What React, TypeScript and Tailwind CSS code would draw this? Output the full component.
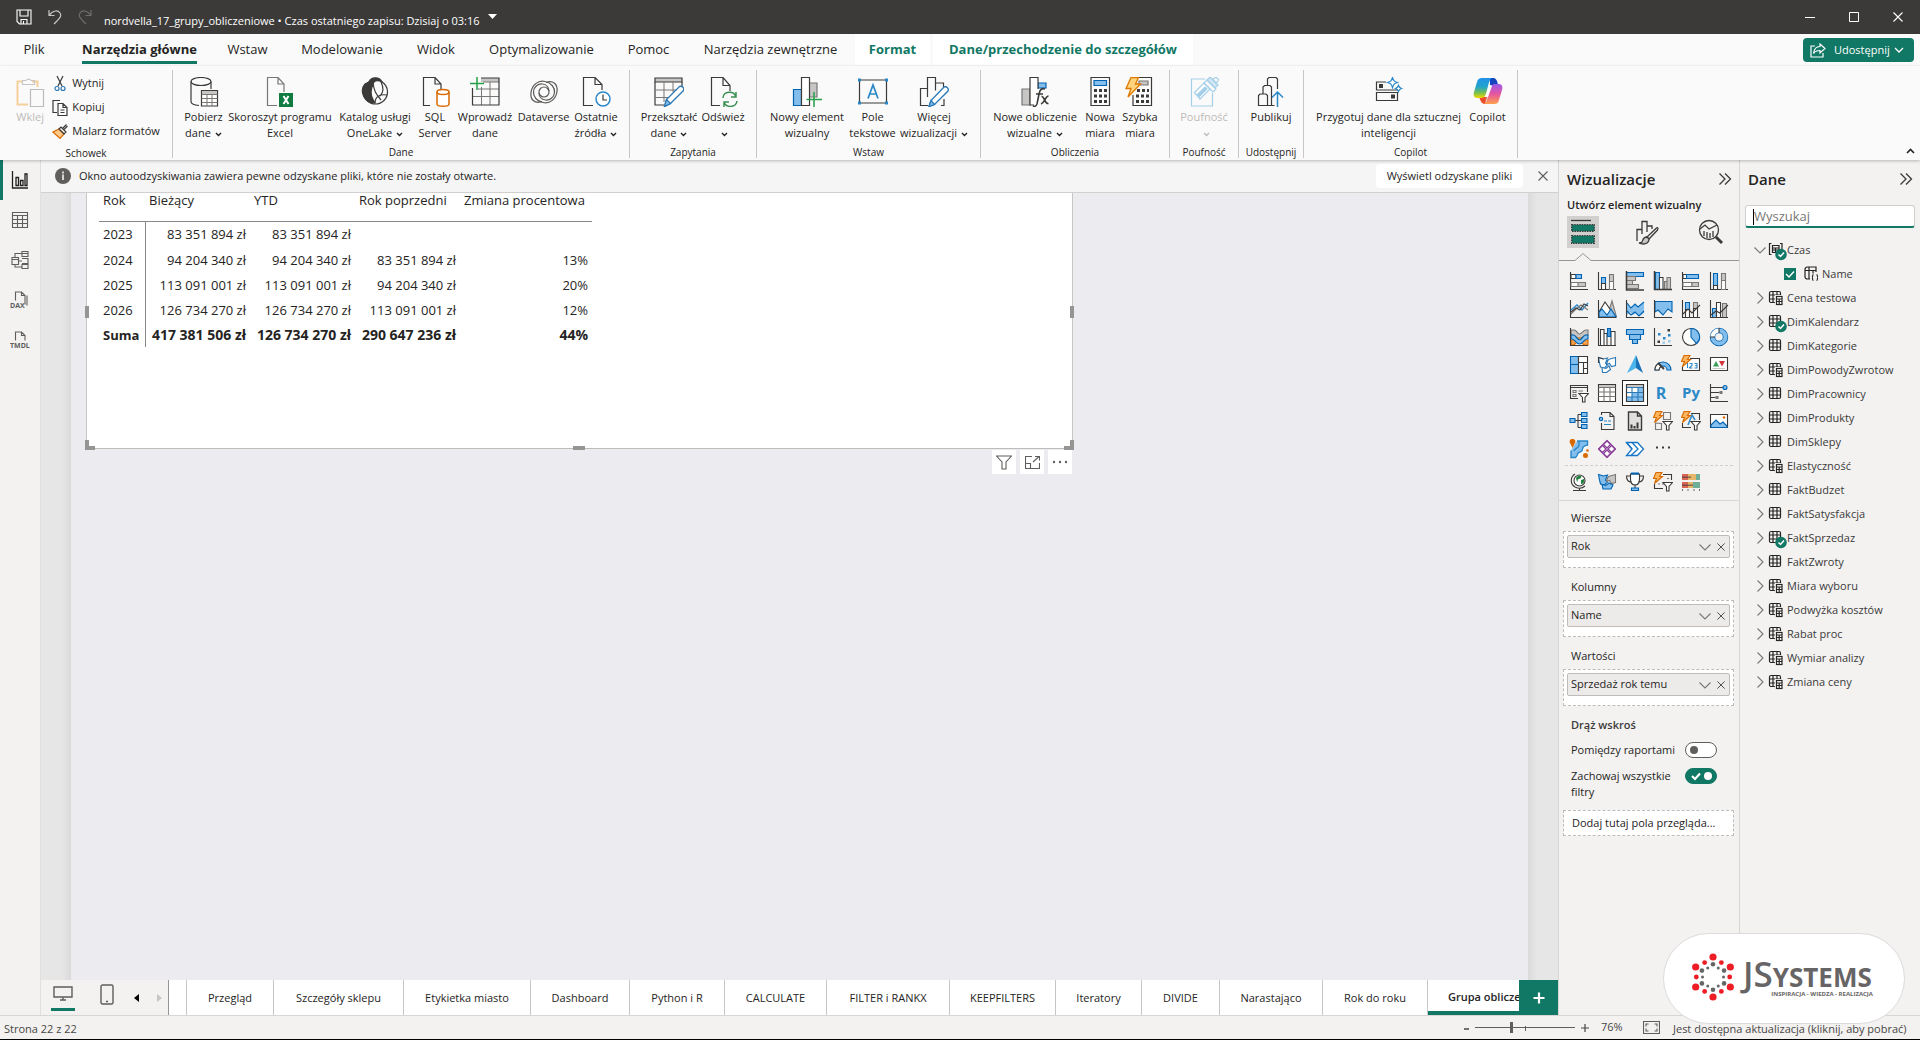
import React from "react";
import clsx from "clsx";

type Kids = { children?: React.ReactNode };

const INK = "#3b3a39";
const BLUE = "#0063b1";
const SKY = "#83beec";
const GREY = "#c8c6c4";
const MID = "#797775";
const GREEN = "#117865";
const ORANGE = "#d86a00";

/* ---------- small shared drawings ---------- */

function Caret({ className = "" }: { className?: string }) {
  return (
    <svg width="7" height="5" viewBox="0 0 7 5" fill="none" stroke="currentColor" strokeWidth="1.4" className={clsx("ml-1 inline-block", className)}>
      <path d="M1 1l2.5 2.5L6 1" />
    </svg>
  );
}

function Chevron({ open }: { open?: boolean }) {
  return (
    <svg width="12" height="12" viewBox="0 0 12 12" fill="none" stroke="#797775" strokeWidth="1.1" className="shrink-0">
      <path d={open ? "M0.500 3.500l5.500 5.500 5.500-5.500" : "M3.500 0.500l5.500 5.500-5.500 5.500"} />
    </svg>
  );
}

function Cross({ size = 10, color = INK }: { size?: number; color?: string }) {
  return (
    <svg width={size} height={size} viewBox="0 0 10 10" fill="none" stroke={color} strokeWidth="1.1">
      <path d="M0.500 0.500l9 9M9.500 0.500l-9 9" />
    </svg>
  );
}

function DoubleChevron() {
  return (
    <svg width="14" height="14" viewBox="0 0 14 14" fill="none" stroke={INK} strokeWidth="1.3">
      <path d="M1.500 1.500L7 7l-5.500 5.500M7 1.500L12.500 7 7 12.500" />
    </svg>
  );
}

/* ---------- ribbon icons ---------- */

function R({ children }: Kids) {
  return (
    <svg width="30" height="30" viewBox="0 0 30 30" fill="none" stroke={INK} strokeWidth="1.2" className="shrink-0">
      {children}
    </svg>
  );
}

const PAGE = "M10 28.500H3.500V0.500H15l6 6.500v8M15 0.500V7h6";

const ribbonIcons: Record<string, React.ReactNode> = {
  paste: (
    <R>
      <path d="M13 27.500H2.500v-23H8M17 4.500h5.500V10" stroke="#f5cf9b" strokeWidth="2" />
      <path d="M7.500 7.500v-4H11a3 3 0 0 1 5 0h3.500v4z" stroke={GREY} />
      <path d="M15.500 12.500h13v17h-13z" stroke="#bebbb8" fill="#fafafa" />
    </R>
  ),
  getData: (
    <R>
      <ellipse cx="12" cy="4.500" rx="10" ry="4" />
      <path d="M2 4.500v20c0 2 3 3.500 8 4M22 4.500V12" />
      <path d="M12.500 13.500h16v15.500h-16z" fill="#fff" />
      <path d="M13 15.500h15" strokeWidth="3" stroke={GREY} />
      <path d="M12.500 17.500h16M12.500 21.500h16M12.500 25.500h16M18 17.500V29M23 17.500V29" strokeWidth="1" stroke={MID} />
    </R>
  ),
  excel: (
    <R>
      <path d="M12 28.500H2.500V0.500H13l6 6.500v8M13 0.500V7h6" stroke={MID} />
      <path d="M14 16h14v14H14z" fill="#107c41" stroke="none" />
      <path d="M18.500 19l5 8M23.500 19l-5 8" stroke="#fff" strokeWidth="2" />
    </R>
  ),
  onelake: (
    <R>
      <circle cx="15.500" cy="15" r="12" />
      <path d="M9 5C11 0 19-1 22 5c-5-3-9-1-9 3-3 5-2 12 2 18C4 26-1 14 5 7z" fill={INK} />
      <path d="M13 6c1 8 3 11 8 17M21 5c3 6 2 11-1 14M15 26c0-7 6-9 12-8" />
    </R>
  ),
  sql: (
    <R>
      <path d={PAGE} />
      <path d="M17 15v12c0 3 12 3 12 0V15" stroke={ORANGE} strokeWidth="1.500" fill="#fff" />
      <ellipse cx="23" cy="15" rx="6" ry="2.500" stroke={ORANGE} strokeWidth="1.500" fill="#fff" />
    </R>
  ),
  enter: (
    <R>
      <path d="M11 1h18v4H11z" fill={GREY} stroke="none" />
      <path d="M2.500 19.500H29M8 12h21M11.500 10v18M20 5v23M13 5h16" stroke={MID} strokeWidth="1" />
      <path d="M11 1h18v27H2.500V11" />
      <path d="M7 0v13M0 6.500h14" stroke="#23a04a" strokeWidth="1.500" />
    </R>
  ),
  dataverse: (
    <R>
      <path d="M13 24.500C6 27 1 23 2 15.500 3 8 9 3 16 4.500c6 1 10 6 9.500 11-.5 5-4.500 8-9 7.500-4-.4-6.500-3.500-6.500-7" stroke="#5c5a58" />
      <path d="M17 5.500C24 3 29 7 28 14.500 27 22 21 27 14 25.500c-6-1-10-6-9.500-11C5 9.500 9 6.500 13.500 7c4 .4 6.500 3.500 6.500 7" stroke="#5c5a58" />
      <circle cx="15" cy="15" r="5" stroke="#5c5a58" />
    </R>
  ),
  recent: (
    <R>
      <path d="M12 28.500H2.500V0.500H14l7 7V13M14 0.500V7.500h7" />
      <circle cx="22" cy="22" r="7" fill="#fff" stroke="#2b88c8" strokeWidth="1.500" />
      <path d="M22 17.500V23h4" />
    </R>
  ),
  transform: (
    <R>
      <path d="M1 5v23h9M28 5v5" />
      <path d="M1 1h27v4H1z" fill={GREY} stroke={INK} />
      <path d="M1 13h22M1 20.500h14M10 5v20M19 5v10" stroke={MID} strokeWidth="1" />
      <path d="M10.500 29.500l2-7L25.500 9.500c3-1 5 2 4 4L16.500 26.500z" fill="#fff" stroke="#2b78b5" strokeWidth="1.400" />
      <path d="M10.500 29.500l2-7 4 4z" fill={SKY} stroke="#2b78b5" />
    </R>
  ),
  refresh: (
    <R>
      <path d="M12 28.500H3.500V0.500H15l7 8V14M15 0.500V8.500h7" />
      <path d="M15 21c0-7 11-8 13-1M28 15v5h-5M29 24c-1 7-11 7-13 1M16 30v-5h5" stroke="#3a9152" strokeWidth="1.500" />
    </R>
  ),
  newVisual: (
    <R>
      <path d="M1.500 12.500h8v16h-8z" fill={SKY} stroke={BLUE} />
      <path d="M17 6h8v14h-8z" fill={GREY} stroke={MID} />
      <path d="M9.500 0.500h8v28h-8z" fill="#fff" />
      <path d="M22 15v15M14.500 22.500H30" stroke="#23a04a" strokeWidth="1.500" />
    </R>
  ),
  textBox: (
    <R>
      <path d="M1.500 3h27v23h-27z" />
      <path d="M0 1.500h3v3H0zM27 1.500h3v3h-3zM0 24.500h3v3H0zM27 24.500h3v3h-3z" fill="#2b88c8" stroke="none" />
      <path d="M10 21.500L15 8l5 13.500M11.500 17h7" stroke="#2b88c8" strokeWidth="1.700" />
    </R>
  ),
  moreVisuals: (
    <R>
      <path d="M9 28.500H1.500v-17h7M8.500 20V0.500h8v13M16.500 6h8v4M22 28.500h3V22" />
      <path d="M10 29.500l2-6L25 10c3-1 5 2 4 4L15.500 27.500z" fill="#fff" stroke="#2b78b5" strokeWidth="1.400" />
      <path d="M10 29.500l2-6 3.500 4z" fill={SKY} stroke="#2b78b5" />
    </R>
  ),
  newCalc: (
    <R>
      <path d="M2 12h8v16H2z" fill={GREY} stroke={MID} />
      <path d="M18 6h8v5h-8z" fill={SKY} stroke={BLUE} />
      <path d="M10 0.500h8v27.500h-8z" fill="#fff" stroke="none" />
      <path d="M14 28h-4V0.500h8V12" />
      <path d="M25 12c-3-1-5 0-6 5l-2 10c-1 2-2 3-4 2M16 17h7M21.500 19.500c3-1 3 8 7 7M28.500 19c-3 0-4 7-7.500 8" strokeWidth="1.600" />
    </R>
  ),
  newMeasure: (
    <R>
      <path d="M6 0.500h18.500v28H6z" />
      <path d="M9 3.500h12.500v5H9z" fill={SKY} stroke={BLUE} />
      <path d="M9 13.500h13M9 19h13M9 24.500h13" strokeWidth="3" strokeDasharray="3 2" />
    </R>
  ),
  quickMeasure: (
    <R>
      <path d="M14 0.500h12.500v28H8V18" />
      <path d="M14 4h9v4h-9z" fill={GREY} stroke={MID} />
      <path d="M12 13.500h12M11 19h13M11 24.500h13" strokeWidth="3" strokeDasharray="3 2" />
      <path d="M6 .5h7.500L10.500 7h5L3 20l3-8.500H1z" fill="#ffd47d" stroke="#e07800" strokeWidth="1.300" />
    </R>
  ),
  privacy: (
    <R>
      <g stroke="#a5cfe8">
        <path d="M16 2H2.500v27h21V16" />
        <path d="M5.500 15.500L15 6l6 6-10 10z" fill="#fff" />
        <path d="M8.500 17.500L16 10l2 2-7.500 7.500z" fill="#a5cfe8" />
        <path d="M18 3l3-3 8 8-3 3z" fill="#cfe6f4" />
        <path d="M15 6l3-3 9 9-3 3zM24 2l3-2 3 3-3 3z" />
      </g>
    </R>
  ),
  publish: (
    <R>
      <path d="M11.500 28.500h-9V18.500L4 17h6l1.500 1.500zM7 17V10l1.500-1.500H14L15.500 10v18.500h-4M11.500 8.500V2L13 0.500h7L21.500 2v10M15.500 28.500h3" />
      <path d="M21.500 30V15M16 20.500l5.500-5.500 5.500 5.500" stroke="#2b88c8" strokeWidth="1.500" />
    </R>
  ),
  aiData: (
    <R>
      <path d="M12 5H2.500v8h21v-2M2.500 15.500h21v8h-21z" />
      <path d="M5 7h4v4H5zM17 17.500h4v4h-4z" fill={INK} stroke="none" />
      <path d="M18.500 0.500c1 3.500 1.500 4 5 5-3.500 1-4 1.500-5 5-1-3.500-1.500-4-5-5 3.500-1 4-1.500 5-5zM24.500 8.500c.6 2 .9 2.300 3 3-2.100.7-2.400 1-3 3-.6-2-.9-2.300-3-3 2.100-.7 2.400-1 3-3z" stroke="#2b88c8" fill="#fff" />
    </R>
  ),
  copilot: (
    <svg width="30" height="30" viewBox="0 0 30 30" className="shrink-0">
      <defs>
        <linearGradient id="cpA" x1="0" y1="0" x2="0" y2="1">
          <stop offset="0" stopColor="#1f8fe8" />
          <stop offset=".45" stopColor="#22a5c9" />
          <stop offset=".75" stopColor="#7dc14c" />
          <stop offset="1" stopColor="#f5d800" />
        </linearGradient>
        <linearGradient id="cpB" x1="0" y1="0" x2="0" y2="1">
          <stop offset="0" stopColor="#9b59e8" />
          <stop offset=".5" stopColor="#e556a0" />
          <stop offset="1" stopColor="#ffa04a" />
        </linearGradient>
      </defs>
      <path d="M17 1h3c3 0 4 2 5 7h-8z" fill="#1546c0" />
      <path d="M6 20h8l-2 7c-3 0-4-2-6-7z" fill="#ee4d2d" />
      <path d="M9 1h10c-2 1-3 4-4 8l-2 8c-1 3-3 4-5 4H4c-3 0-4-3-3-6l3-10c1-3 2-4 5-4z" fill="url(#cpA)" />
      <path d="M21 27H11c2-1 3-4 4-8l2-8c1-3 3-4 5-4h4c3 0 4 3 3 6l-3 10c-1 3-2 4-5 4z" fill="url(#cpB)" />
      <path d="M16 9h3l-4 11h-3z" fill="#fff" />
    </svg>
  ),
};

function RibbonButton({ icon, lines, width, menu, disabled }: { icon: string; lines: string[]; width: string; menu?: boolean; disabled?: boolean }) {
  return (
    <button type="button" disabled={disabled} className={clsx("flex flex-col items-center whitespace-nowrap", width, disabled ? "text-[#bebbb8]" : "text-[#252423]")}>
      {ribbonIcons[icon]}
      <span className="mt-0.5 block text-[11px] leading-4">
        {lines.map((l, i) => (
          <span key={i} className="block h-4">
            {l}
            {menu && i === lines.length - 1 && <Caret className={l ? "" : "ml-0"} />}
          </span>
        ))}
      </span>
    </button>
  );
}

function RibbonGroup({ label, width, children }: Kids & { label: string; width: string }) {
  return (
    <section aria-label={label} className={clsx("mt-1 mb-0.5 flex shrink-0 flex-col items-center border-r border-[#c8c6c4] pt-[7px]", width)}>
      <div className="flex h-[65px] items-start justify-center">{children}</div>
      <span className="mt-[5px] text-[10px] leading-3 text-[#252423]">{label}</span>
    </section>
  );
}

/* ---------- visual gallery ---------- */

function V({ children }: Kids) {
  return (
    <svg width="20" height="20" viewBox="0 0 20 20" fill="none" stroke={INK} strokeWidth="1.1" className="shrink-0">
      {children}
    </svg>
  );
}
const Axis = () => <path d="M1.500 1v17.500H19" />;
const Bolt = () => <path d="M3 0.500h6L6.500 4.500H9.500L1.500 11.500 3.500 6.500H0.500z" fill="#ffb45e" stroke={ORANGE} />;
const Funnel = () => <path d="M10 10.500h9.500L16 14.500v4.500h-2.500v-4.500z" fill="#fff" />;

const gallery: [string, React.ReactNode][] = [
  ["Skumulowany słupkowy", <V><Axis /><path d="M2 3.500h5v4H2z" fill="#fff" /><path d="M7 3.500h5.500v4H7z" fill={SKY} stroke={BLUE} /><path d="M2 11.500h9v4H2z" fill="#fff" stroke={MID} /><path d="M9 11.500h7.500v4H9z" fill={GREY} stroke={MID} /></V>],
  ["Skumulowany kolumnowy", <V><Axis /><path d="M4.500 6.500h4v6h-4z" fill={SKY} stroke={BLUE} /><path d="M4.500 12.500h4v6h-4z" fill="#fff" /><path d="M12.500 3.500h4v7h-4z" fill={GREY} stroke={MID} /><path d="M12.500 10.500h4v8h-4z" fill="#fff" stroke={MID} /></V>],
  ["Grupowany słupkowy", <V><path d="M1.500 1.500h17v4h-17z" fill={SKY} stroke={BLUE} /><path d="M1.500 5.500h9v4h-9z" fill={GREY} stroke={MID} /><path d="M1.500 9.500h6v4h-6zM1.500 13.500h12v4h-12z" fill={GREY} stroke={MID} /><path d="M1.500 0v19H19" strokeWidth="1.500" /></V>],
  ["Grupowany kolumnowy", <V><path d="M2.500 1.500h4v17h-4z" fill={SKY} stroke={BLUE} /><path d="M6.500 6.500h3.500v12H6.500z" fill="#fff" /><path d="M11.500 10.500h2.500v8h-2.500zM14 6.500h3.500v12H14z" fill={GREY} stroke={MID} /><path d="M1.500 0v18.500H19" strokeWidth="1.500" /></V>],
  ["100% słupkowy", <V><Axis /><path d="M2 3.500h4v4H2z" fill="#fff" /><path d="M5.500 3.500h12v4h-12z" fill={SKY} stroke={BLUE} /><path d="M2 11.500h9v4H2z" fill="#fff" stroke={MID} /><path d="M11 11.500h6.500v4H11z" fill={GREY} stroke={MID} /></V>],
  ["100% kolumnowy", <V><Axis /><path d="M4.500 2.500h4v12h-4z" fill={SKY} stroke={BLUE} /><path d="M4.500 14.500h4v4h-4z" fill="#fff" /><path d="M12.500 2.500h4v7h-4z" fill={GREY} stroke={MID} /><path d="M12.500 9.500h4v9h-4z" fill="#fff" stroke={MID} /></V>],
  ["Liniowy", <V><Axis /><path d="M2 11l6-5 5 5 6-7" stroke="#2b88c8" strokeWidth="1.400" /><path d="M2 15l5-5 5-4 7 5" stroke={MID} /><path d="M2 13l5-4 4 2 4-6 4 2" /></V>],
  ["Warstwowy", <V><path d="M10 18l5-16 4.500 16z" fill={GREY} stroke={MID} /><path d="M2 13L8 3l7 10-4 3z" fill="#fff" /><path d="M2 18v-5l3-3 5 6 4-6 5 8z" fill={SKY} stroke={BLUE} /><Axis /></V>],
  ["Skumulowany warstwowy", <V><path d="M2 4l4 5 4-4 3 3 6-5v11l-5 3-3-3-3 2-3-3-3 3z" fill={SKY} stroke="none" /><path d="M2 4l4 5 4-4 3 3 6-5M2 12l4 4 4-3 4 4 5-5" stroke={BLUE} /><Axis /></V>],
  ["100% warstwowy", <V><path d="M2 2.500h17V13l-4-3-5 6-5-5-3 2z" fill={SKY} stroke={BLUE} /><Axis /></V>],
  ["Liniowy i skumulowany", <V><path d="M4.500 3.500h4v7h-4z" fill={SKY} stroke={BLUE} /><path d="M4.500 10.500h4v8h-4z" fill="#fff" /><path d="M12.500 3.500h4v6h-4z" fill={GREY} stroke={MID} /><path d="M12.500 9.500h4v9h-4z" fill="#fff" /><path d="M2 15l5-5 4 4 8-8" /><Axis /></V>],
  ["Liniowy i grupowany", <V><path d="M3.500 9.500h4v9h-4z" fill={SKY} stroke={BLUE} /><path d="M7.500 3.500h4v15h-4z" fill="#fff" /><path d="M13.500 4.500h4v14h-4z" fill={GREY} stroke={MID} /><path d="M2 16l5-4 4 2 8-8" /><Axis /></V>],
  ["Wstążkowy", <V><path d="M2 3h3c3 0 3 4 5.500 4S14 3 17 3h2v5h-2c-3 0-4 4-6.500 4S7 8 4 8H2z" fill={GREY} stroke={MID} /><path d="M2 13h3l3-2h5l3 2h3v5h-4l-3-3h-4l-3 3H2z" fill="#f0a050" stroke={ORANGE} /><path d="M2 8h2c3 0 4 5 6.500 5S14 8 17 8h2v4h-1c-3 0-4 5-7.500 5S6 12 3 12H2z" fill={SKY} stroke={BLUE} /><Axis /></V>],
  ["Kaskadowy", <V><path d="M3.500 2.500H7v16H3.500zM7 6.500h3v12H7zM14 4.500h4v14h-4z" fill="#fff" /><path d="M10.500 1.500h3v8h-3z" fill="#4a9be0" stroke={BLUE} /><Axis /></V>],
  ["Lejkowy", <V><path d="M1.500 2.500h17v5h-17zM4.500 7.500h11v5h-11zM7.500 12.500h5v4h-5z" fill={SKY} stroke={BLUE} /></V>],
  ["Punktowy", <V><Axis /><g stroke="none"><path d="M5 6h2.500v2.500H5zM10 10h2.500v2.500H10zM15 7h2.500v2.500H15z" fill="#2b88c8" /><path d="M14.500 2h2.500v2.500h-2.500zM4.500 13.500H7V16H4.500z" fill={INK} /><path d="M9.500 14.500H12V17H9.500zM15 13h2.500v2.500H15z" fill="#9ccbea" /></g></V>],
  ["Kołowy", <V><circle cx="10" cy="10" r="8.500" fill="#fff" /><path d="M10 1.500a8.500 8.500 0 0 1 5.500 15L10 10z" fill={SKY} stroke={BLUE} /></V>],
  ["Pierścieniowy", <V><circle cx="10" cy="10" r="6.500" stroke={BLUE} strokeWidth="5.500" /><circle cx="10" cy="10" r="6.500" stroke={SKY} strokeWidth="4" /><path d="M10 3.500A6.500 6.500 0 0 0 3.500 10" stroke="#fff" strokeWidth="4" /><path d="M10 1v5M1 10h5" /></V>],
  ["Mapa drzewa", <V><path d="M1.500 1.500h8v17h-8z" fill={SKY} stroke={BLUE} /><path d="M1.500 9.500h8" stroke={BLUE} /><path d="M9.500 1.500h9v6h-9zM9.500 7.500h5v11h-5zM14.500 7.500h4v6h-4zM14.500 13.500h4v5h-4z" fill="#fff" /></V>],
  ["Mapa", <V><path d="M1.500 2.500l5 1.500 4-1-2 5 2 2-3 3-4-1-1-4zM10.500 6c1-3 4-2 8-3.500v8l-4 1-2-3-3 1zM5 12.500l4 1 3-2.500 1.500 3.500-4 3h-4z" fill="#fff" stroke="#2b78b5" /><path d="M1.500 8V2.500l5 1.500" /></V>],
  ["Azure Maps", <V><path d="M11 0l7 18-7-5z" fill="#1a73b8" stroke="none" /><path d="M11 0L2 18l9-5z" fill="#4bb4ea" stroke="none" /></V>],
  ["Miernik", <V><path d="M2 15a8 8 0 0 1 16 0h-4a4 4 0 0 0-8 0z" fill={SKY} stroke={BLUE} /><path d="M2 15a8 8 0 0 1 4-7l2 3.500a4 4 0 0 0-2 3.500z" fill="#fff" /><path d="M5 8l6 6" strokeWidth="1.800" /></V>],
  ["Karta", <V><path d="M9 3.500h9.500v12h-17V11" fill="#fff" /><path d="M6.500 8v5M8.500 8.500h2.500V10.500l-2.500 2v.5H11.500M13.500 8.500H16v4.500h-2.500M14 10.700h2" stroke="#2b88c8" /><Bolt /></V>],
  ["Kluczowy wskaźnik", <V><path d="M1.500 2.500h17v13h-17z" fill="#fff" /><path d="M4 11.500L7 6l3 5.500z" fill="#3c9b58" stroke="none" /><path d="M10 6h6l-3 5.500z" fill="#d13438" stroke="none" /><path d="M3.500 13.500H16" stroke={GREY} /></V>],
  ["Fragmentator", <V><path d="M9 15.500H1.500v-13h17V9M1.500 4.500h17" /><path d="M4 7.500h3v2H4zM4 11.500h3v2H4zM9.500 8H14" stroke={MID} /><Funnel /></V>],
  ["Tabela", <V><path d="M1.500 1.500h17v17h-17z" fill="#fff" /><path d="M2 3h16" stroke={GREY} strokeWidth="2" /><path d="M1.500 4.500h17M1.500 9h17M1.500 13.500h17M7 4.500v14M13 4.500v14" stroke={MID} /></V>],
  ["Macierz", <V><path d="M1.500 1.500h17v17h-17z" fill="#fff" /><path d="M2 3h16" stroke={GREY} strokeWidth="2" /><path d="M13 4.500h5.500v14H1.500v-4.500H13z" fill={SKY} stroke="none" /><path d="M7 9.500h6v5H7z" fill={SKY} stroke="none" /><path d="M1.500 4.500h17M1.500 9.500h17M1.500 14h17M7 4.500v14M13 4.500v14" stroke="#2b78b5" /><path d="M1.500 1.500h17v17h-17z" /></V>],
  ["Skrypt R", <span className="-ml-1 text-[16px] leading-5 font-bold text-[#2b88c8]">R</span>],
  ["Python", <span className="-mt-0.5 text-[15px] leading-5 font-bold text-[#2b88c8]">Py</span>],
  ["Wpływy", <V><Axis /><path d="M1.500 4.500h13M1.500 9.500h9M1.500 14.500h5" /><circle cx="16" cy="4.500" r="2" fill={SKY} stroke={BLUE} /><path d="M10.500 8h3v3h-3zM6.500 13h3v3h-3z" fill={MID} stroke="none" /></V>],
  ["Drzewo dekompozycji", <V><path d="M6 9.500h6M9 3.500v13M9 3.500h3M9 16.500h3" /><path d="M1 7.500h5v4H1zM12.500 1.500h5.500v4h-5.500zM12.500 7.500h5.500v4h-5.500zM12.500 13.500h5.500v4h-5.500z" fill={SKY} stroke={BLUE} /></V>],
  ["Narracja", <V><path d="M4.500 4V1.500H13l4 4v13H4.500V12M13 1.500V5.500h4" /><path d="M7 10h3M7 13.500h7M11 10h3" stroke="#2b88c8" /><circle cx="4" cy="8" r="1.700" fill={SKY} stroke={BLUE} /></V>],
  ["Raport podzielony", <V><path d="M3.500 1h9l4 4v14h-13zM12.500 1v4h4" fill="#e1dfdd" strokeWidth="1.400" /><path d="M6.500 17.500v-4M9.500 17.500v-2.500M12.500 17.500v-6" strokeWidth="2" /></V>],
  ["Fragmentator kart", <V><path d="M10.500 1.500h7v7h-7zM2.500 12v6.500h6v-6z" stroke={MID} /><Bolt /><Funnel /></V>],
  ["Fragmentator tekstu", <V><path d="M10 2.500h8.500V9M1.500 12v4.500H10" /><path d="M7 14l4-10 3 5" stroke="#2b88c8" strokeWidth="1.500" /><Bolt /><Funnel /></V>],
  ["Obraz", <V><path d="M1.500 3.500h17v13h-17z" fill="#fff" /><path d="M2 14l5-5 4 4 3-2 4 4v1.500H2z" fill={SKY} stroke={BLUE} /><circle cx="15" cy="6.500" r="1.300" fill={ORANGE} stroke="none" /></V>],
  ["ArcGIS", <V><path d="M2 10v9h9v-3c0-3 4-2 4-5s3-2 4-3V2H9v4c0 3-3 2-4 5z" fill="#fff" stroke="none" /><path d="M8 2h10.500v4c-3 1-5 1-5 4 0 4-4 2-5 5 0 1.500-1 3-2 3.500H2v-7M10 2v4c0 3-4 3-5 6" stroke="#2b88c8" strokeWidth="1.400" fill={SKY} /><path d="M3.500 0C6 0 7 2 6 4L3.500 9 1 4C0 2 1 0 3.500 0z" fill={ORANGE} stroke="none" /><circle cx="16.500" cy="16.500" r="2.500" fill={ORANGE} stroke="none" /><circle cx="18.500" cy="11.500" r="1.300" fill={ORANGE} stroke="none" /></V>],
  ["Power Apps", <V><g stroke="#8a3f99" fill="#fff" strokeWidth="1.200"><path d="M10 1.500l8.500 8.500L10 18.500 1.500 10z" strokeLinejoin="round" /><path d="M10 2l3.500 3.500L10 9 6.500 5.500zM10 11l3.500 3.500L10 18l-3.500-3.500zM5.500 6.500L9 10l-3.500 3.500L2 10zM14.500 6.500L18 10l-3.500 3.500L11 10z" /></g></V>],
  ["Power Automate", <V><g stroke="#1a76c7" strokeWidth="1.300"><path d="M1.500 3.500h11l6 6.500-6 6.500h-11L7 10z" fill="#fff" /><path d="M1.500 3.500L7 10M6 16.500L13 10 7 3.500" /></g></V>],
  ["Pobierz więcej wizualizacji", <V><path d="M3 8.500h2M9 8.500h2M15 8.500h2" strokeWidth="1.800" /></V>],
];

const customGallery: [string, React.ReactNode][] = [
  ["Globus", <V><circle cx="10.500" cy="8.500" r="5.500" fill="#fff" /><path d="M7 6c2-3 4-2 5-2s0 3-2 3-1 3-2 3zM12 8l3-1c1 3-1 5-3 5z" fill="#23803f" stroke="none" /><path d="M6 2C1 5 1 12 6 15c4 2 8 1 10-1M10.500 16v2.500M4 18.500h13" /></V>],
  ["Mapa kształtów", <V><path d="M1.500 2.500l5 1.500 4-1-2 5 2 2-3 3-4-1-1-4z" fill={SKY} stroke={BLUE} /><path d="M10.500 6c1-3 4-2 8-3.500v8l-4 1-2-3-3 1z" fill={GREY} stroke={MID} /><path d="M5 12.500l4 1 3-2.500 4 2-2 4H6z" fill={SKY} stroke={BLUE} /></V>],
  ["Cele", <V><path d="M5.500 2h9v5c0 3-1 6-4.500 6S5.500 10 5.500 7z" fill="#fff" /><path d="M5.500 4H1.500c0 4 2 6 5 6M14.500 4h4c0 4-2 6-5 6M10 13v3" /><path d="M6 1.500h8" stroke={BLUE} strokeWidth="2" /><path d="M6.500 16h7v2.500h-7z" fill={SKY} stroke={BLUE} /></V>],
  ["Fragmentator przycisków", <V><path d="M10 2.500h8.500V8M1.500 12v4.500H10" /><path d="M5 12h2M9 12h2M14 6.500h2" stroke={MID} /><Bolt /><Funnel /></V>],
  ["Wykres pociskowy", <V><g stroke="none"><path d="M1 2h6v6H1zM1 10h6v6H1z" fill="#d96552" /><path d="M7 2h8v6H7zM7 10h5v6H7z" fill="#e8b66b" /><path d="M15 2h4v6h-4zM12 10h7v6h-7z" fill="#6fae98" /><path d="M1 4.500h9V6H1zM1 12.500h11V14H1z" fill={INK} opacity=".6" /></g><path d="M1.500 17v2M7 17v2M13 17v2M18.500 17v2" strokeWidth=".7" /></V>],
];

function GalleryButton({ label, children, selected }: Kids & { label: string; selected?: boolean }) {
  return (
    <button type="button" aria-label={label} className={clsx("flex h-6 w-6 items-center justify-center", selected && "bg-white outline outline-1 outline-[#252423]")}>
      {children}
    </button>
  );
}

/* ---------- field wells ---------- */

function Well({ label, field }: { label: string; field: string }) {
  return (
    <section className="h-[69px]">
      <h3 className="pl-2 text-[11px] leading-4">{label}</h3>
      <div className="mt-[5px] h-[37px] border border-dashed border-[#bebbb8] bg-white p-[3px]">
        <div className="flex h-[23px] items-center rounded-[2px] border border-[#bebbb8] bg-[#edebe9] pl-[3px]">
          <span className="flex-1 truncate text-[11px]">{field}</span>
          <button type="button" aria-label={`Opcje pola ${field}`} className="mr-1.5">
            <Chevron open />
          </button>
          <button type="button" aria-label={`Usuń pole ${field}`} className="mr-1">
            <Cross size={8} />
          </button>
        </div>
      </div>
    </section>
  );
}

function Toggle({ id, on }: { id: string; on?: boolean }) {
  return (
    <span className="relative inline-flex h-4 w-8 shrink-0">
      <input
        id={id}
        type="checkbox"
        role="switch"
        defaultChecked={on}
        className="h-4 w-8 appearance-none rounded-full border border-[#605e5c] bg-white checked:border-[#117865] checked:bg-[#117865]"
      />
      <svg width="32" height="16" viewBox="0 0 32 16" className="pointer-events-none absolute inset-0">
        {on ? (
          <>
            <circle cx="23" cy="8" r="4" fill="#fff" />
            <path d="M7 8l3 3 5-5.500" fill="none" stroke="#fff" strokeWidth="2.200" />
          </>
        ) : (
          <circle cx="9" cy="8" r="4" fill="#605e5c" />
        )}
      </svg>
    </span>
  );
}

/* ---------- data tree ---------- */

type Kind = "table" | "calc" | "group";

function TableGlyph({ kind, checked }: { kind: Kind; checked?: boolean }) {
  return (
    <svg width="18" height="18" viewBox="0 0 18 18" fill="none" stroke="#252423" strokeWidth="1.200" className="shrink-0 overflow-visible">
      {kind === "group" ? (
        <>
          <path d="M3.500 2.500H1.500v11h2M12 2.500h2v11h-2" />
          <path d="M4.500 4.500h6.500v7H4.500zM4.500 7h6.500M4.500 9h6.500M7.500 7v4" />
        </>
      ) : (
        <>
          <rect x="1.500" y="2.500" width="11" height="11" rx="1.500" />
          <path d="M1.500 6h11M1.500 10h11M5 2.500v11M9 2.500v11" />
        </>
      )}
      {kind === "calc" && (
        <>
          <path d="M7.500 6.500h8v10h-8z" fill="#f3f2f1" stroke="#f3f2f1" />
          <rect x="8.500" y="7.500" width="5.500" height="8" fill="#fff" />
          <path d="M8.500 10h5.500M8.500 12.500h5.500M11.200 10v5" />
        </>
      )}
      {checked && (
        <>
          <circle cx="13" cy="13.500" r="5.800" fill={GREEN} stroke="none" />
          <path d="M10.500 13.500l2 2 3.500-4" stroke="#fff" strokeWidth="1.500" />
        </>
      )}
    </svg>
  );
}

const tables: [string, Kind, boolean?][] = [
  ["Cena testowa", "calc"],
  ["DimKalendarz", "table", true],
  ["DimKategorie", "table"],
  ["DimPowodyZwrotow", "calc"],
  ["DimPracownicy", "table"],
  ["DimProdukty", "table"],
  ["DimSklepy", "table"],
  ["Elastyczność", "calc"],
  ["FaktBudzet", "table"],
  ["FaktSatysfakcja", "table"],
  ["FaktSprzedaz", "table", true],
  ["FaktZwroty", "table"],
  ["Miara wyboru", "calc"],
  ["Podwyżka kosztów", "calc"],
  ["Rabat proc", "calc"],
  ["Wymiar analizy", "calc"],
  ["Zmiana ceny", "calc"],
];

function TreeRow({ name, kind, checked, open }: { name: string; kind: Kind; checked?: boolean; open?: boolean }) {
  return (
    <button type="button" className="flex h-6 w-full items-center pl-[14px] text-left text-[11px] text-[#3b3a39]">
      <Chevron open={open} />
      <span className="ml-0.5 flex w-[19px] justify-start">
        <TableGlyph kind={kind} checked={checked} />
      </span>
      <span className="whitespace-nowrap">{name}</span>
    </button>
  );
}

/* ---------- matrix ---------- */

const rows: string[][] = [
  ["2023", "83 351 894 zł", "83 351 894 zł", "", ""],
  ["2024", "94 204 340 zł", "94 204 340 zł", "83 351 894 zł", "13%"],
  ["2025", "113 091 001 zł", "113 091 001 zł", "94 204 340 zł", "20%"],
  ["2026", "126 734 270 zł", "126 734 270 zł", "113 091 001 zł", "12%"],
];

function Matrix() {
  return (
    <table className="ml-3 w-[493px] table-fixed border-collapse text-[13px] whitespace-nowrap text-[#252423]">
      <colgroup>
        <col className="w-[46px]" />
        <col className="w-[105px]" />
        <col className="w-[105px]" />
        <col className="w-[105px]" />
        <col className="w-[132px]" />
      </colgroup>
      <thead>
        <tr className="h-7 border-b border-[#8a8886]">
          {["Rok", "Bieżący", "YTD", "Rok poprzedni", "Zmiana procentowa"].map((h) => (
            <th key={h} scope="col" className="px-1 pt-0 text-left align-top leading-[14px] font-normal">
              {h}
            </th>
          ))}
        </tr>
      </thead>
      <tbody>
        {rows.map((r, i) => (
          <tr key={r[0]} className={i === 0 ? "h-[26px]" : "h-[25px]"}>
            {r.map((c, j) =>
              j === 0 ? (
                <th key={j} scope="row" className="border-r border-[#8a8886] px-1 text-left leading-4 font-normal">
                  {c}
                </th>
              ) : (
                <td key={j} className="px-1 text-right leading-4">
                  {c}
                </td>
              ),
            )}
          </tr>
        ))}
      </tbody>
      <tfoot>
        <tr className="h-[25px] font-bold">
          <th scope="row" className="border-r border-[#8a8886] px-1 text-left leading-4">
            Suma
          </th>
          {["417 381 506 zł", "126 734 270 zł", "290 647 236 zł", "44%"].map((c) => (
            <td key={c} className="px-1 text-right text-[14px] leading-4">
              {c}
            </td>
          ))}
        </tr>
      </tfoot>
    </table>
  );
}

/* ---------- page sections ---------- */

const menuTabs: [string, string][] = [
  ["Plik", "w-[68px]"],
  ["Narzędzia główne", "w-[143px]"],
  ["Wstaw", "w-[73px]"],
  ["Modelowanie", "w-[116px]"],
  ["Widok", "w-[72px]"],
  ["Optymalizowanie", "w-[139px]"],
  ["Pomoc", "w-[75px]"],
  ["Narzędzia zewnętrzne", "w-[169px]"],
];

const pageTabs: [string, string][] = [
  ["Przegląd", "w-[87px]"],
  ["Szczegóły sklepu", "w-[130px]"],
  ["Etykietka miasto", "w-[127px]"],
  ["Dashboard", "w-[99px]"],
  ["Python i R", "w-[95px]"],
  ["CALCULATE", "w-[102px]"],
  ["FILTER i RANKX", "w-[123px]"],
  ["KEEPFILTERS", "w-[106px]"],
  ["Iteratory", "w-[86px]"],
  ["DIVIDE", "w-[78px]"],
  ["Narastająco", "w-[103px]"],
  ["Rok do roku", "w-[105px]"],
];

function TitleBar() {
  return (
    <div className="flex h-[34px] shrink-0 items-center bg-[#3b3a39] text-white">
      <button type="button" aria-label="Zapisz" className="ml-4">
        <svg width="16" height="16" viewBox="0 0 16 16" fill="none" stroke="#fff" strokeWidth="1.100">
          <path d="M1 1h14v14H3.500L1 12.500zM4 1v6h8V1M5 15v-4.500h6V15M7.500 12v3" />
        </svg>
      </button>
      <button type="button" aria-label="Cofnij" className="ml-4">
        <svg width="14" height="16" viewBox="0 0 14 16" fill="none" stroke="#c8c6c4" strokeWidth="1.200">
          <path d="M1 1v5.500h5.500M1.500 6C5 1 10 1 12 4c2 3 0 5-6 11" />
        </svg>
      </button>
      <button type="button" aria-label="Ponów" disabled className="ml-4">
        <svg width="14" height="16" viewBox="0 0 14 16" fill="none" stroke="#6e6c6a" strokeWidth="1.200">
          <path d="M13 1v5.500H7.500M12.500 6C9 1 4 1 2 4c-2 3 0 5 6 11" />
        </svg>
      </button>
      <button type="button" className="mt-2 ml-3 text-left text-[11px] leading-4 whitespace-nowrap">
        nordvella_17_grupy_obliczeniowe • Czas ostatniego zapisu: Dzisiaj o 03:16
      </button>
      <svg width="9" height="6" viewBox="0 0 9 6" className="ml-2">
        <path d="M0 0h9L4.500 5z" fill="#fff" />
      </svg>
      <div className="ml-auto flex items-center">
        <button type="button" aria-label="Minimalizuj" className="flex w-11 justify-center">
          <svg width="10" height="10" viewBox="0 0 10 10" stroke="#fff"><path d="M0 5.500h10" /></svg>
        </button>
        <button type="button" aria-label="Maksymalizuj" className="flex w-11 justify-center">
          <svg width="10" height="10" viewBox="0 0 10 10" fill="none" stroke="#fff"><path d="M0.500 0.500h9v9h-9z" /></svg>
        </button>
        <button type="button" aria-label="Zamknij" className="flex w-11 justify-center">
          <Cross color="#fff" />
        </button>
      </div>
    </div>
  );
}

function MenuBar() {
  return (
    <nav aria-label="Menu główne" className="flex h-8 shrink-0 items-start bg-[#fafafa] text-[13px]">
      {menuTabs.map(([t, w], i) => (
        <button key={t} type="button" className={clsx("relative h-8 shrink-0 whitespace-nowrap", w, i === 1 && "font-bold")}>
          {t}
          {i === 1 && <span className="absolute right-[14px] bottom-0.5 left-[14px] h-[3px] bg-[#117865]" />}
        </button>
      ))}
      <button type="button" className="h-[31px] w-[75px] bg-white font-bold text-[#117865]">
        Format
      </button>
      <button type="button" className="ml-[3px] h-[31px] w-[260px] bg-white font-bold whitespace-nowrap text-[#117865]">
        Dane/przechodzenie do szczegółów
      </button>
      <button type="button" className="mt-1 mr-1.5 ml-auto flex h-6 w-[111px] items-center rounded bg-[#117865] pl-[7px] text-[11px] text-white">
        <svg width="16" height="15" viewBox="0 0 16 15" fill="none" stroke="#fff" strokeWidth="1.200">
          <path d="M5 3H1v11h12v-4M10 1l5 4.500-5 4.500V7.500C7 7.500 5 8 3.500 10.500 4 6 6 3.500 10 3.500z" />
        </svg>
        <span className="ml-2">Udostępnij</span>
        <svg width="10" height="6" viewBox="0 0 10 6" fill="none" stroke="#fff" strokeWidth="1.300" className="ml-1">
          <path d="M1 1l4 4 4-4" />
        </svg>
      </button>
    </nav>
  );
}

function Ribbon() {
  return (
    <div className="relative z-10 flex h-[94px] shrink-0 bg-[#fafafa] shadow-[0_1px_3px_rgba(0,0,0,0.25)]">
      <RibbonGroup label="Schowek" width="w-[173px]">
        <RibbonButton icon="paste" lines={["Wklej"]} width="w-[44px]" disabled />
        <div className="-mt-1.5 mr-1 flex flex-col text-[11px] whitespace-nowrap text-[#252423]">
          <button type="button" className="flex h-6 items-center gap-1">
            <svg width="16" height="17" viewBox="0 0 16 17" fill="none" stroke={INK} strokeWidth="1.200">
              <path d="M5 1l5 10M11 1L6 11" />
              <circle cx="5" cy="13.500" r="2" stroke="#2b78b5" />
              <circle cx="11" cy="13.500" r="2" stroke="#2b78b5" />
            </svg>
            Wytnij
          </button>
          <button type="button" className="flex h-6 items-center gap-1">
            <svg width="16" height="17" viewBox="0 0 16 17" fill="none" stroke={INK} strokeWidth="1.200">
              <path d="M5 13.500H1v-12h7M6 4.500h5l4 4v8H6zM11 4.500v4h4M8.500 11h4M8.500 13.500h4" />
            </svg>
            Kopiuj
          </button>
          <button type="button" className="flex h-6 items-center gap-1">
            <svg width="16" height="17" viewBox="0 0 16 17" fill="none" stroke={INK} strokeWidth="1.200">
              <path d="M1 9l6-3 5 5-4 4.500z" fill="#ffc98a" stroke={ORANGE} />
              <path d="M7 6l2-2 5 5-2 2zM10.500 5.500l4-4M11.500 7l4-4" />
            </svg>
            Malarz formatów
          </button>
        </div>
      </RibbonGroup>
      <RibbonGroup label="Dane" width="w-[457px]">
        <RibbonButton icon="getData" lines={["Pobierz", "dane"]} menu width="w-[43px]" />
        <RibbonButton icon="excel" lines={["Skoroszyt programu", "Excel"]} width="w-[110px]" />
        <RibbonButton icon="onelake" lines={["Katalog usługi", "OneLake"]} menu width="w-[80px]" />
        <RibbonButton icon="sql" lines={["SQL", "Server"]} width="w-[40px]" />
        <RibbonButton icon="enter" lines={["Wprowadź", "dane"]} width="w-[60px]" />
        <RibbonButton icon="dataverse" lines={["Dataverse"]} width="w-[57px]" />
        <RibbonButton icon="recent" lines={["Ostatnie", "źródła"]} menu width="w-[48px]" />
      </RibbonGroup>
      <RibbonGroup label="Zapytania" width="w-[127px]">
        <RibbonButton icon="transform" lines={["Przekształć", "dane"]} menu width="w-[60px]" />
        <RibbonButton icon="refresh" lines={["Odśwież", ""]} menu width="w-[48px]" />
      </RibbonGroup>
      <RibbonGroup label="Wstaw" width="w-[224px]">
        <RibbonButton icon="newVisual" lines={["Nowy element", "wizualny"]} width="w-[80px]" />
        <RibbonButton icon="textBox" lines={["Pole", "tekstowe"]} width="w-[51px]" />
        <RibbonButton icon="moreVisuals" lines={["Więcej", "wizualizacji"]} menu width="w-[72px]" />
      </RibbonGroup>
      <RibbonGroup label="Obliczenia" width="w-[189px]">
        <RibbonButton icon="newCalc" lines={["Nowe obliczenie", "wizualne"]} menu width="w-[92px]" />
        <RibbonButton icon="newMeasure" lines={["Nowa", "miara"]} width="w-[38px]" />
        <RibbonButton icon="quickMeasure" lines={["Szybka", "miara"]} width="w-[42px]" />
      </RibbonGroup>
      <RibbonGroup label="Poufność" width="w-[69px]">
        <RibbonButton icon="privacy" lines={["Poufność", ""]} menu width="w-[60px]" disabled />
      </RibbonGroup>
      <RibbonGroup label="Udostępnij" width="w-[65px]">
        <RibbonButton icon="publish" lines={["Publikuj"]} width="w-[56px]" />
      </RibbonGroup>
      <RibbonGroup label="Copilot" width="w-[214px]">
        <RibbonButton icon="aiData" lines={["Przygotuj dane dla sztucznej", "inteligencji"]} width="w-[154px]" />
        <RibbonButton icon="copilot" lines={["Copilot"]} width="w-[44px]" />
      </RibbonGroup>
      <button type="button" aria-label="Zwiń wstążkę" className="mr-[5px] mb-1.5 ml-auto self-end">
        <svg width="9" height="6" viewBox="0 0 9 6" fill="none" stroke="#252423" strokeWidth="1.600" className="block">
          <path d="M1 5l3.500-3.500L8 5" />
        </svg>
      </button>
    </div>
  );
}

function Rail() {
  const items: [string, React.ReactNode][] = [
    ["Widok raportu", <path d="M1.500 0v17H17M5 14.500v-8h2.500v8zM9.500 14.500v-5H12v5zM14 14.500V3h2v11.500z" stroke="#201f1e" strokeWidth="1.300" />],
    ["Widok tabeli", <path d="M1.500 1.500h15v15h-15zM1.500 4.500h15M1.500 8.500h15M1.500 12.500h15M6.500 4.500v12M11.500 4.500v12" />],
    ["Widok modelu", <path d="M1 6.500h6.500v7H1zM1 8.500h6.500M11 .5h6v5h-6zM11 2.500h6M11 7.500h6v5h-6M11 13.500h6v4h-6zM4 6.500v-4h7M7.500 10H11M4 13.500v2.500h7" />],
    ["Widok zapytań DAX", <><path d="M4.500 9.500V1h6l3.500 3.500v9M10.500 1v3.500H14M16 4.500v10" /><text x="-1" y="17" fontSize="7" fontWeight="700" fill="#605e5c" stroke="none">DAX</text></>],
    ["Widok TMDL", <><path d="M4.500 9.500V1h6l3.500 3.500v5M10.500 1v3.500H14" /><text x="-1" y="17" fontSize="7" fontWeight="700" fill="#605e5c" stroke="none">TMDL</text></>],
  ];
  return (
    <nav aria-label="Widoki" className="flex w-[41px] shrink-0 flex-col border-r border-[#e1dfdd] bg-[#f3f2f1]">
      {items.map(([label, icon], i) => (
        <button key={label} type="button" aria-label={label} className={clsx("flex h-10 items-center justify-center border-l-[3px] pr-[3px]", i === 0 ? "border-[#117865]" : "border-transparent")}>
          <svg width="18" height="18" viewBox="0 0 18 18" fill="none" stroke="#605e5c" strokeWidth="1.100" className="overflow-visible">
            {icon}
          </svg>
        </button>
      ))}
    </nav>
  );
}

function Canvas() {
  return (
    <div className="flex min-h-0 flex-1 bg-[#e6e6e6]">
      <div className="w-[30px] shrink-0 bg-linear-to-r from-[#e6e6e6] from-70% to-[#dadada]" />
      <div className="min-w-0 flex-1 bg-[#ebebf0] pl-[15px]">
        <div className="relative h-[256px] w-[987px] border border-t-0 border-[#c8c6c4] border-b-[#bebbb8] bg-white">
          <Matrix />
          <span className="absolute top-[113px] -left-0.5 h-3 w-1 bg-[#979593]" />
          <span className="absolute top-[113px] -right-0.5 h-3 w-1 bg-[#979593]" />
          <span className="absolute -bottom-0.5 left-[486px] h-1 w-3 bg-[#979593]" />
          <span className="absolute -bottom-0.5 -left-0.5 h-2.5 w-2.5 border-b-[4px] border-l-[4px] border-[#979593]" />
          <span className="absolute -right-0.5 -bottom-0.5 h-2.5 w-2.5 border-r-[4px] border-b-[4px] border-[#979593]" />
        </div>
        <div className="mt-px flex w-[986px] justify-end gap-1">
          <button type="button" aria-label="Filtry" className="flex h-6 w-6 items-center justify-center bg-white">
            <svg width="16" height="15" viewBox="0 0 16 15" fill="none" stroke="#605e5c" strokeWidth="1.100">
              <path d="M.5 1h15L10 7v7H6V7z" />
            </svg>
          </button>
          <button type="button" aria-label="Tryb koncentracji uwagi" className="flex h-6 w-6 items-center justify-center bg-white">
            <svg width="15" height="13" viewBox="0 0 15 13" fill="none" stroke="#605e5c" strokeWidth="1.100">
              <path d="M7 .5H.5v12h14V7M.5 7.500h5v5M8 6l6-5.500M10 .5h4.500v4" />
            </svg>
          </button>
          <button type="button" aria-label="Więcej opcji" className="flex h-6 w-6 items-center justify-center bg-white">
            <svg width="16" height="4" viewBox="0 0 16 4" fill="#605e5c">
              <circle cx="2" cy="2" r="1.200" />
              <circle cx="8" cy="2" r="1.200" />
              <circle cx="14" cy="2" r="1.200" />
            </svg>
          </button>
        </div>
      </div>
      <div className="w-[30px] shrink-0 bg-linear-to-l from-[#e6e6e6] from-70% to-[#dadada]" />
    </div>
  );
}

function PageTabs() {
  return (
    <div className="flex h-[35px] shrink-0 bg-[#f3f2f1] text-[11px]">
      <div className="flex w-[128px] shrink-0 items-start border-r border-[#979593] pl-2.5">
        <button type="button" aria-label="Układ pulpitu" className="flex h-[31px] w-6 flex-col items-center justify-between border-b-[3px] border-[#117865] pt-1.5">
          <svg width="20" height="15" viewBox="0 0 20 15" fill="none" stroke="#605e5c" strokeWidth="1.400">
            <path d="M1 1h18v10H1zM10 11v3M7 14h6" />
          </svg>
        </button>
        <button type="button" aria-label="Układ mobilny" className="ml-[25px] pt-1">
          <svg width="14" height="21" viewBox="0 0 14 21" fill="none" stroke="#605e5c" strokeWidth="1.400">
            <rect x="1" y="1" width="12" height="19" rx="1.500" />
            <path d="M6 17.500h2" />
          </svg>
        </button>
        <button type="button" aria-label="Poprzednie strony" className="ml-5 pt-3.5">
          <svg width="5" height="8" viewBox="0 0 5 8"><path d="M5 0v8L0 4z" fill="#000" /></svg>
        </button>
        <button type="button" aria-label="Następne strony" disabled className="ml-[18px] pt-3.5">
          <svg width="5" height="8" viewBox="0 0 5 8"><path d="M0 0v8l5-4z" fill="#c8c6c4" /></svg>
        </button>
      </div>
      <div className="flex min-w-0 flex-1 bg-white">
        <span className="w-[18px] shrink-0 border-r border-[#c8c6c4]" />
        {pageTabs.map(([t, w]) => (
          <button key={t} type="button" className={clsx("h-full shrink-0 border-r border-[#c8c6c4] pt-0.5 whitespace-nowrap text-[#252423]", w)}>
            {t}
          </button>
        ))}
        <button type="button" aria-current="page" className="min-w-0 flex-1 overflow-hidden border-b-4 border-[#117865] pt-1 pl-5 text-left font-semibold whitespace-nowrap">
          Grupa obliczeniowa
        </button>
      </div>
      <button type="button" aria-label="Nowa strona" className="flex w-[39px] shrink-0 items-center justify-center bg-[#117865]">
        <svg width="12" height="12" viewBox="0 0 12 12" stroke="#fff" strokeWidth="2.200"><path d="M6 .5v11M.5 6h11" /></svg>
      </button>
    </div>
  );
}

function Visualizations() {
  return (
    <aside aria-label="Wizualizacje" className="w-[182px] shrink-0 border-x border-[#d8d6d4] bg-[#f3f2f1] text-[#252423]">
      <div className="flex items-center justify-between pt-[9px] pr-[7px] pl-2">
        <h2 className="text-[15px] leading-5 font-semibold">Wizualizacje</h2>
        <button type="button" aria-label="Zwiń okienko Wizualizacje"><DoubleChevron /></button>
      </div>
      <h3 className="mt-2 pl-2 text-[11px] leading-4 font-semibold whitespace-nowrap">Utwórz element wizualny</h3>
      <div className="mt-[3px] flex justify-between pr-3 pl-2">
        <button type="button" aria-label="Kompiluj wizualizację" className="flex h-8 w-8 items-center justify-center bg-[#d2d0ce]">
          <svg width="24" height="26" viewBox="0 0 24 26" fill="none" stroke={INK} strokeWidth="1.300">
            <path d="M0 1.500h20" />
            <path d="M.7 5.700h22.600v6.600H.7zM.7 16.700h22.600v7.600H.7z" fill={GREEN} strokeDasharray="1.500 1" />
          </svg>
        </button>
        <button type="button" aria-label="Formatuj wizualizację" className="flex h-8 w-8 items-center justify-center">
          <svg width="24" height="25" viewBox="0 0 24 25" fill="none" stroke={INK} strokeWidth="1.300">
            <path d="M2 21V9.500h5V14M7 9V1.500h5V12M12 6h5v3M21.500 8L12 17l2 2 8.500-9c1-2 0-3-1-2z" />
            <path d="M12 17c-4 0-4 3-5 5-1 1-2 1-3 1 4 2 10 1 10-4z" fill={GREY} />
          </svg>
        </button>
        <button type="button" aria-label="Analiza" className="flex h-8 w-8 items-center justify-center">
          <svg width="26" height="26" viewBox="0 0 26 26" fill="none" stroke={INK} strokeWidth="1.300">
            <circle cx="11" cy="11" r="9.500" />
            <path d="M2 10l5-4 4 4 8-4M6 17v-5M9 19v-6M12 19v-5M15 18v-6" />
            <path d="M18 18l6 6" strokeWidth="3" />
          </svg>
        </button>
      </div>
      <svg width="180" height="8" viewBox="0 0 180 8" fill="none" stroke="#979593" className="mt-[5px] block w-full">
        <path d="M0 7.500h16L24 .5l8 7h148" />
      </svg>
      <div className="mt-2 ml-2 grid w-[164px] grid-cols-6 gap-x-1 gap-y-1">
        {gallery.map(([label, icon]) => (
          <GalleryButton key={label} label={label} selected={label === "Macierz"}>
            {icon}
          </GalleryButton>
        ))}
      </div>
      <div className="mx-1.5 mt-1 border-t border-dashed border-[#d2d0ce]" />
      <div className="mt-1 ml-2 grid w-[164px] grid-cols-6 gap-x-1">
        {customGallery.map(([label, icon]) => (
          <GalleryButton key={label} label={label}>
            {icon}
          </GalleryButton>
        ))}
      </div>
      <div className="mt-1.5 border-t border-[#d8d6d4] pt-[9px] pr-[5px] pl-1">
        <Well label="Wiersze" field="Rok" />
        <Well label="Kolumny" field="Name" />
        <Well label="Wartości" field="Sprzedaż rok temu" />
        <h3 className="pl-2 text-[11px] leading-4 font-semibold text-[#3b3a39]">Drąż wskroś</h3>
        <div className="mt-[9px] flex items-center pl-2 text-[11px] leading-4">
          <label htmlFor="cross" className="w-[114px] whitespace-nowrap">Pomiędzy raportami</label>
          <Toggle id="cross" />
        </div>
        <div className="mt-2.5 flex items-start pl-2 text-[11px] leading-4">
          <label htmlFor="keep" className="w-[114px]">Zachowaj wszystkie filtry</label>
          <Toggle id="keep" on />
        </div>
        <div className="mt-2.5 truncate border border-dashed border-[#bebbb8] bg-white px-2 text-[11px] leading-6">Dodaj tutaj pola przegląda...</div>
      </div>
    </aside>
  );
}

function DataPane() {
  return (
    <aside aria-label="Dane" className="w-[180px] shrink-0 bg-[#f3f2f1] text-[#252423]">
      <div className="flex items-center justify-between pt-[9px] pr-[7px] pl-2">
        <h2 className="text-[15px] leading-5 font-semibold">Dane</h2>
        <button type="button" aria-label="Zwiń okienko Dane"><DoubleChevron /></button>
      </div>
      <div className="relative mx-[5px] mt-4">
        <input
          type="text"
          aria-label="Wyszukaj"
          placeholder="Wyszukaj"
          className="block h-[23px] w-full rounded-[3px] border border-b-2 border-[#d2d0ce] border-b-[#117865] bg-white pl-2 text-[13px] placeholder:text-[#797775]"
        />
        <span className="absolute top-1 left-2 h-4 w-px bg-black" />
      </div>
      <div className="mt-2.5">
        <TreeRow name="Czas" kind="group" checked open />
        <div className="flex h-6 items-center pl-[44px] text-[11px] text-[#3b3a39]">
          <span className="relative flex h-3 w-3">
            <input id="field-name" type="checkbox" defaultChecked className="h-3 w-3 appearance-none bg-[#117865]" />
            <svg width="12" height="12" viewBox="0 0 12 12" fill="none" stroke="#fff" strokeWidth="1.400" className="pointer-events-none absolute inset-0">
              <path d="M2 6l3 3 5-5.500" />
            </svg>
          </span>
          <svg width="16" height="16" viewBox="0 0 16 16" fill="none" stroke="#252423" strokeWidth="1.200" className="ml-2">
            <path d="M6 13H3.500C2 13 1 12 1 10.500V3.500C1 2 2 1 3.500 1H12v5M1 4.500h11M5 1v12M9 4.500v3" />
            <path d="M9.500 8.500c-1.500 0-.5 3-1.500 3 1 0 0 3 1.500 3M12.500 8.500c1.500 0 .5 3 1.500 3-1 0 0 3-1.500 3" />
          </svg>
          <label htmlFor="field-name" className="ml-0.5">Name</label>
        </div>
        {tables.map(([name, kind, checked]) => (
          <TreeRow key={name} name={name} kind={kind} checked={checked} />
        ))}
      </div>
    </aside>
  );
}

function StatusBar() {
  return (
    <footer className="flex h-[25px] shrink-0 items-center border-t border-b border-t-[#d8d6d4] border-b-black bg-[#f3f2f1] pt-1 pr-1 pl-1 text-[11px] text-[#484644]">
      <span>Strona 22 z 22</span>
      <button type="button" aria-label="Pomniejsz" className="mr-[5px] ml-auto mb-1">
        <svg width="6" height="8" viewBox="0 0 6 8" stroke="#484644" strokeWidth="1.500" className="block"><path d="M0 5h5" /></svg>
      </button>
      <span className="relative mb-1 flex h-3 w-[100px] items-center">
        <input
          type="range"
          aria-label="Powiększenie"
          defaultValue={36}
          className="h-3 w-[100px] appearance-none bg-transparent [&::-webkit-slider-runnable-track]:h-px [&::-webkit-slider-runnable-track]:bg-[#605e5c] [&::-webkit-slider-thumb]:-mt-[5px] [&::-webkit-slider-thumb]:h-[11px] [&::-webkit-slider-thumb]:w-[3px] [&::-webkit-slider-thumb]:appearance-none [&::-webkit-slider-thumb]:bg-[#605e5c]"
        />
        <span className="absolute top-1 left-[50px] h-[5px] w-px bg-[#605e5c]" />
      </span>
      <button type="button" aria-label="Powiększ" className="mb-1 ml-1.5">
        <svg width="8" height="8" viewBox="0 0 8 8" stroke="#484644" strokeWidth="1.200" className="block"><path d="M0 4h8M4 0v8" /></svg>
      </button>
      <span className="mb-1 ml-3 w-[42px] text-[11px]">76%</span>
      <button type="button" aria-label="Dopasuj do strony" className="mb-1">
        <svg width="17" height="13" viewBox="0 0 17 13" fill="none" stroke="#605e5c" strokeWidth="1.100" className="block">
          <path d="M.5.5h16v12H.5zM5.500 3H3v2.500M11.500 3H14v2.500M5.500 10H3V7.500M11.500 10H14V7.500" />
        </svg>
      </button>
      <a href="#update" className="ml-[13px] w-[243px] whitespace-nowrap">Jest dostępna aktualizacja (kliknij, aby pobrać)</a>
    </footer>
  );
}

const ring = (r: number, offset: number) =>
  Array.from({ length: 6 }, (_, i) => {
    const a = ((i * 60 + offset) * Math.PI) / 180;
    return [22 + r * Math.cos(a), 25 + r * Math.sin(a)];
  });

function BrandBadge() {
  return (
    <div className="absolute right-[15px] bottom-4 z-20 flex h-[91px] w-[242px] items-start rounded-full border border-[#dcdadc] bg-white pt-[18px] pl-[27px]">
      <svg width="44" height="50" viewBox="0 0 44 50" className="shrink-0">
        {ring(20, 30).map(([x, y], i) => <circle key={i} cx={x} cy={y} r="3.600" fill="#ee1c25" />)}
        {ring(16.7, 0).map(([x, y], i) => <circle key={i} cx={x} cy={y} r="2.400" fill="#ee1c25" />)}
        {ring(12.8, 30).map(([x, y], i) => <circle key={i} cx={x} cy={y} r="2.300" fill="#666" />)}
        {ring(10.5, 0).map(([x, y], i) => <circle key={i} cx={x} cy={y} r="1.500" fill="#666" />)}
      </svg>
      <div className="relative ml-2 shrink-0">
        <svg width="136" height="38" viewBox="0 0 136 38" fill="#666465" className="block overflow-visible font-['Open_Sans',sans-serif]">
          <text x="0" y="35" fontSize="35" fontWeight="600">
            J<tspan>S</tspan><tspan fontSize="26" fontWeight="700">YSTEMS</tspan>
          </text>
        </svg>
        <span className="block w-[130px] text-right text-[6px] leading-[8px] font-bold whitespace-nowrap text-[#666465]">INSPIRACJA - WIEDZA - REALIZACJA</span>
      </div>
    </div>
  );
}

export default function App() {
  return (
    <div className="relative flex h-screen flex-col overflow-hidden bg-[#f3f2f1] font-['Open_Sans',sans-serif] text-[#252423]">
      <TitleBar />
      <MenuBar />
      <Ribbon />
      <div className="flex min-h-0 flex-1">
        <Rail />
        <main className="flex min-w-0 flex-1 flex-col">
          <div role="status" className="flex h-[33px] shrink-0 items-center border-b border-[#d2d0ce] bg-[#f5f5f5] pl-3.5 text-[11px]">
            <svg width="16" height="16" viewBox="0 0 16 16" className="shrink-0">
              <circle cx="8" cy="8" r="8" fill="#605e5c" />
              <path d="M8 6.500v5.500M8 3.500v2" stroke="#f3f2f1" strokeWidth="1.600" />
            </svg>
            <span className="ml-2">Okno autoodzyskiwania zawiera pewne odzyskane pliki, które nie zostały otwarte.</span>
            <button type="button" className="ml-auto h-6 w-[147px] rounded bg-white whitespace-nowrap">Wyświetl odzyskane pliki</button>
            <button type="button" aria-label="Zamknij powiadomienie" className="mr-2.5 ml-[15px]"><Cross size={10} color="#605e5c" /></button>
          </div>
          <Canvas />
          <PageTabs />
        </main>
        <Visualizations />
        <DataPane />
      </div>
      <StatusBar />
      <BrandBadge />
    </div>
  );
}
